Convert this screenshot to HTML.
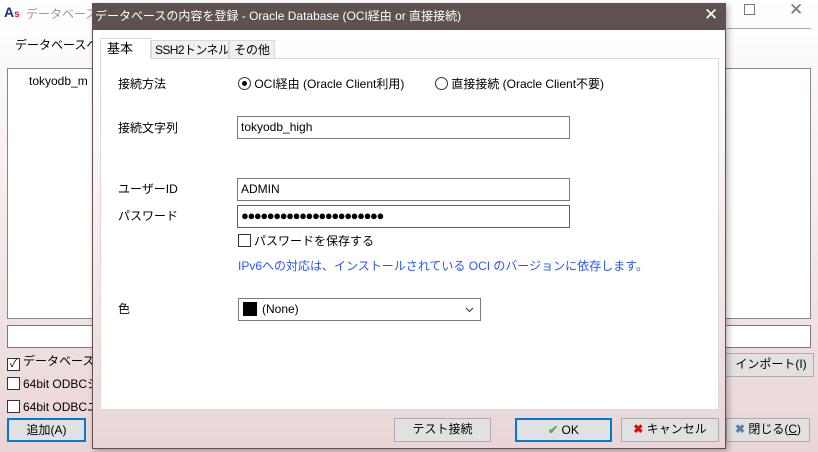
<!DOCTYPE html>
<html><head><meta charset="utf-8"><style>
*{box-sizing:border-box;margin:0;padding:0}
body{width:818px;height:452px;position:relative;overflow:hidden;font-family:"Liberation Sans","Noto Sans CJK JP",sans-serif;font-size:12px;color:#000;background:linear-gradient(#fff 0px,#fdf9f9 60px,#ead5d6 452px)}
.a{position:absolute;white-space:nowrap}
.btn{position:absolute;background:#e1e1e1;border:1px solid #adadad;text-align:center;line-height:21px;font-size:12px}
.in{position:absolute;background:#fff;border:1px solid #7a7a7a;padding-left:3px;line-height:20px}
.cb{display:inline-block;width:13px;height:13px;border:1px solid #333;background:#fff;vertical-align:-2px;margin-right:3px}
</style></head><body>
<div class="a" style="left:4px;top:4px;font-weight:bold;color:#1a2a9a;font-size:14px">A<span style="color:#d02040;font-size:10px">s</span></div>
<div class="a" style="left:26px;top:5px;color:#999">データベースの</div>
<div class="a" style="left:744px;top:4px;width:11px;height:11px;border:1px solid #777"></div>
<div class="a" style="left:789px;top:0px;font-size:17px;color:#777">✕</div>
<div class="a" style="left:727px;top:28px;width:84px;height:1px;background:#aaa"></div>
<div class="a" style="left:15px;top:36px">データベースへ</div>
<div class="a" style="left:7px;top:68px;width:804px;height:251px;background:#fff;border:1px solid #828790"></div>
<div class="a" style="left:29px;top:74px">tokyodb_m</div>
<div class="a" style="left:7px;top:325px;width:804px;height:23px;background:#fff;border:1px solid #7a7a7a"></div>
<div class="a" style="left:7px;top:352px"><span class="cb" style="text-align:center;line-height:10px;font-size:11px">✓</span>データベースツ</div>
<div class="a" style="left:7px;top:375px"><span class="cb"></span>64bit ODBCシ</div>
<div class="a" style="left:7px;top:398px"><span class="cb"></span>64bit ODBCユ</div>
<div class="btn" style="left:7px;top:418px;width:79px;height:24px;border:2px solid #0078d7;line-height:20px">追加(A)</div>
<div class="btn" style="left:716px;top:353px;width:98px;height:24px">　インポート(I)</div>
<div class="btn" style="left:726px;top:418px;width:84px;height:24px"><span style="color:#5a7ea8;font-weight:bold">✖</span> 閉じる(<u>C</u>)</div>
<div class="a" style="left:92px;top:3px;width:634px;height:446px;border:1px solid #5f5150;background:linear-gradient(#fff 30px,#fdf8f8 120px,#ead5d6 446px);box-shadow:2px 2px 6px rgba(0,0,0,.3)"></div>
<div class="a" style="left:92px;top:3px;width:634px;height:27px;background:#5f5150;color:#fff;font-size:12px;line-height:26px;padding-left:3px">データベースの内容を登録 - Oracle Database (OCI経由 or 直接接続)</div>
<div class="a" style="left:704px;top:5px;color:#fff;font-size:17px">✕</div>
<div class="a" style="left:100px;top:58px;width:619px;height:352px;background:#fff;border:1px solid #d9d9d9"></div>
<div class="a" style="left:100px;top:38px;width:51px;height:21px;background:#fff;border:1px solid #d9d9d9;border-bottom:none;padding-left:6px;line-height:20px;font-size:13px">基本</div>
<div class="a" style="left:151px;top:40px;width:78px;height:19px;background:#f0f0f0;border:1px solid #d9d9d9;line-height:18px;padding-left:3px;letter-spacing:-0.6px;overflow:hidden">SSH2トンネル</div>
<div class="a" style="left:229px;top:40px;width:46px;height:19px;background:#f0f0f0;border:1px solid #d9d9d9;line-height:18px;padding-left:4px">その他</div>
<div class="a" style="left:118px;top:75px">接続方法</div>
<div class="a" style="left:238px;top:75px"><span style="display:inline-block;width:13px;height:13px;border:1px solid #333;border-radius:50%;vertical-align:-2px;position:relative"><span style="position:absolute;left:3px;top:3px;width:5px;height:5px;border-radius:50%;background:#000"></span></span> OCI経由 (Oracle Client利用)</div>
<div class="a" style="left:435px;top:75px"><span style="display:inline-block;width:13px;height:13px;border:1px solid #333;border-radius:50%;vertical-align:-2px"></span> 直接接続 (Oracle Client不要)</div>
<div class="a" style="left:118px;top:119px">接続文字列</div>
<div class="in" style="left:237px;top:116px;width:333px;height:23px">tokyodb_high</div>
<div class="a" style="left:118px;top:180px">ユーザーID</div>
<div class="in" style="left:237px;top:178px;width:333px;height:23px">ADMIN</div>
<div class="a" style="left:118px;top:207px">パスワード</div>
<div class="in" style="left:237px;top:205px;width:333px;height:23px;border-color:#0078d7;font-size:13px;letter-spacing:-1.4px">●●●●●●●●●●●●●●●●●●●●●●</div>
<div class="a" style="left:238px;top:232px"><span class="cb" style="border-color:#333"></span>パスワードを保存する</div>
<div class="a" style="left:238px;top:257px;color:#2a55ff">IPv6への対応は、インストールされている OCI のバージョンに依存します。</div>
<div class="a" style="left:118px;top:300px">色</div>
<div class="in" style="left:238px;top:298px;width:243px;height:23px;border-color:#7a7a7a"><span style="display:inline-block;width:14px;height:14px;background:#000;vertical-align:-3px;margin:0 5px 0 1px"></span>(None)<svg style="position:absolute;right:6px;top:8px" width="9" height="6"><path d="M1 1 L4.5 4.5 L8 1" fill="none" stroke="#333" stroke-width="1"/></svg></div>
<div class="btn" style="left:394px;top:418px;width:97px;height:24px">テスト接続</div>
<div class="btn" style="left:515px;top:418px;width:97px;height:24px;border:2px solid #0078d7;line-height:20px"><span style="color:#4caf50;font-weight:bold">✔</span> OK</div>
<div class="btn" style="left:621px;top:418px;width:98px;height:24px"><span style="color:#d01010;font-weight:bold">✖</span> キャンセル</div>
</body></html>
